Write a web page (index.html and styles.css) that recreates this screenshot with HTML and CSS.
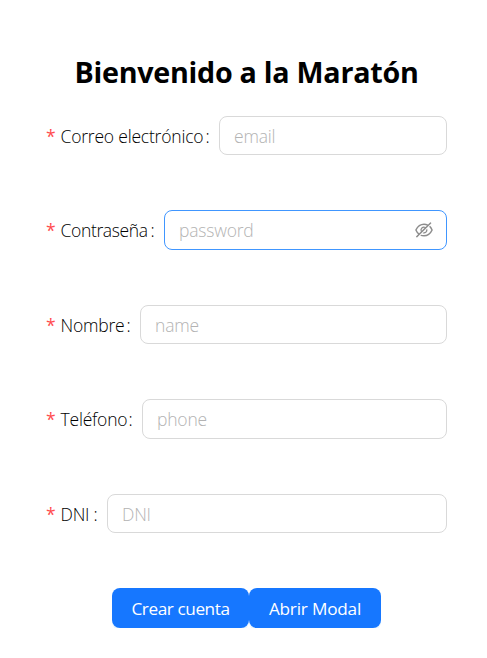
FILE: index.html
```
<!DOCTYPE html>
<html lang="es">
<head>
<meta charset="utf-8">
<title>Bienvenido a la Maratón</title>
<link rel="stylesheet" href="styles.css">
</head>
<body>
<main>
  <h1>Bienvenido a la Maratón</h1>
  <form>
    <div class="row email"><label for="email"><i>*</i><span class="name">Correo electrónico</span><b>:</b></label><div class="field"><input id="email" placeholder="email"></div></div>
    <div class="row password"><label for="password"><i>*</i><span class="name">Contraseña</span><b>:</b></label><div class="field active"><input id="password" type="password" placeholder="password"><svg class="eye" viewBox="64 64 896 896" fill="currentColor"><path d="M942.2 486.2Q889.47 375.11 816.7 305l-50.88 50.88C807.31 395.53 843.45 447.4 874.7 512 791.5 684.2 673.4 766 512 766q-72.67 0-133.87-22.38L323 798.75Q408 838 512 838q288.3 0 430.2-300.3a60.29 60.29 0 000-51.5zm-63.57-320.64L836 122.88a8 8 0 00-11.32 0L715.31 232.2Q624.86 186 512 186q-288.3 0-430.2 300.3a60.3 60.3 0 000 51.5q56.69 119.4 136.5 191.41L112.48 835a8 8 0 000 11.31L155.17 889a8 8 0 0011.31 0l712.15-712.12a8 8 0 000-11.32zM149.3 512C232.6 339.8 350.7 258 512 258c54.54 0 104.13 9.36 149.12 28.39l-70.3 70.3a176 176 0 00-238.13 238.13l-83.42 83.42C223.1 637.49 183.3 582.28 149.3 512zm246.7 0a112.11 112.11 0 01146.2-106.69L401.31 546.2A112 112 0 01396 512z"/><path d="M508 624c-3.46 0-6.87-.16-10.25-.47l-52.82 52.82a176.09 176.09 0 00227.42-227.42l-52.82 52.82c.31 3.38.47 6.79.47 10.25a111.94 111.94 0 01-112 112z"/></svg></div></div>
    <div class="row nombre"><label for="name"><i>*</i><span class="name">Nombre</span><b>:</b></label><div class="field"><input id="name" placeholder="name"></div></div>
    <div class="row phone"><label for="phone"><i>*</i><span class="name">Teléfono</span><b>:</b></label><div class="field"><input id="phone" placeholder="phone"></div></div>
    <div class="row dni"><label for="dni"><i>*</i><span class="name">DNI</span><b>:</b></label><div class="field"><input id="dni" placeholder="DNI"></div></div>
    <div class="actions"><button type="button" class="create">Crear cuenta</button><button type="button" class="modal">Abrir Modal</button></div>
  </form>
</main>
</body>
</html>
```
FILE: styles.css
```
* { box-sizing: border-box; }
body { margin: 0; background: #fff; font-family: "Open Sans", "Noto Sans", sans-serif; }
main { padding: 52px 40px 0 46px; }
h1 { margin: 0; height: 40px; line-height: 40px; text-align: center; font-size: 28.7px; font-weight: 700; letter-spacing: -0.27px; white-space: nowrap; color: #000; }
form { padding-top: 23.7px; }
.row { display: flex; height: 39.5px; margin-bottom: 55px; font-size: 17.5px; font-weight: 300; }
label { display: flex; flex: none; align-items: center; line-height: 37px; color: #000; white-space: nowrap; letter-spacing: -0.2px; padding-top: 2px; }
i { width: 14.5px; flex: none; font-style: normal; font-weight: 400; color: #ff4d4f; }
b { font-weight: 300; margin-left: auto; width: 13.5px; }
.email label { width: 173px; }
.password label { width: 118px; letter-spacing: -0.35px; }
.nombre label { width: 94px; }
.phone label { width: 96px; }
.dni label { width: 61px; }
.field { flex: 1; min-width: 0; display: flex; align-items: center; padding: 0 14px; border: 1px solid #d9d9d9; border-radius: 8px; }
.active { border-color: #4096ff; padding-right: 13px; }
input { flex: 1; min-width: 0; width: 0; padding: 1px 0 0; border: 0; outline: 0; background: none; font: inherit; height: 37px; letter-spacing: -0.2px; }
input::placeholder { color: #b3b3b3; opacity: 1; }
.eye { width: 18px; height: 18px; color: rgba(0, 0, 0, .45); }
.actions { display: flex; margin-left: 66px; }
button { height: 40px; padding: 1px 0 0; border: 0; border-radius: 8px; background: #1677ff; color: #fff; font: 400 17.2px/39px "Open Sans", "Noto Sans", sans-serif; letter-spacing: -0.2px; white-space: nowrap; box-shadow: 0 2px 0 rgba(5, 145, 255, .1); }
.create { width: 137px; letter-spacing: -0.42px; }
.modal { width: 132px; }
```
